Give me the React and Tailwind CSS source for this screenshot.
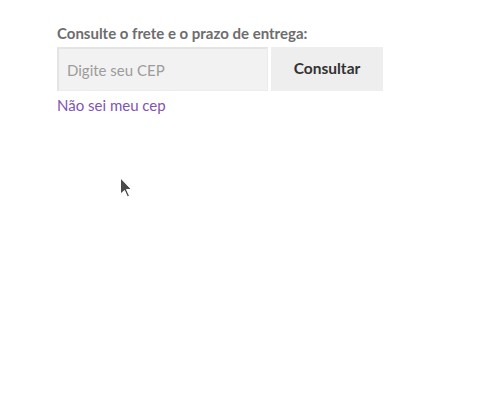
export default function App() {
  return (
    <div className="relative h-[420px] w-[498px] bg-white font-['Lato','Liberation_Sans',sans-serif]">
      <div className="pl-[57px] pt-[24px]">
        <p className="text-[15px] font-bold leading-[18px] text-[#6d6d6d]">
          Consulte o frete e o prazo de entrega:
        </p>
        <form className="mt-[5px] flex gap-[3px]" onSubmit={(e) => e.preventDefault()}>
          <input
            type="text"
            placeholder="Digite seu CEP"
            className="h-[44px] w-[211px] border-t-2 border-l-2 border-[#e4e4e4] border-r border-b border-r-[#ececec] border-b-[#ececec] bg-[#f2f2f2] px-[8px] text-[15px] text-[#333] placeholder:text-[#9c9c9c] focus:outline-none"
          />
          <button
            type="submit"
            className="h-[44px] w-[112px] bg-[#eeeeee] text-[15.5px] font-bold text-[#333]"
          >
            Consultar
          </button>
        </form>
        <a href="#" className="mt-[3px] block text-[15px] leading-[22px] text-[#7f54b3]">
          Não sei meu cep
        </a>
      </div>
      <svg
        className="absolute left-[119px] top-[177px]"
        width="16"
        height="24"
        viewBox="0 0 16 24"
      >
        <path d="M1.5 1 L1.5 17 L5.5 13.5 L8.5 20 L10.5 19 L7.5 12.5 L12.5 12.5 Z" fill="#4a4a4a" stroke="#fff" strokeWidth="1" />
      </svg>
    </div>
  );
}
